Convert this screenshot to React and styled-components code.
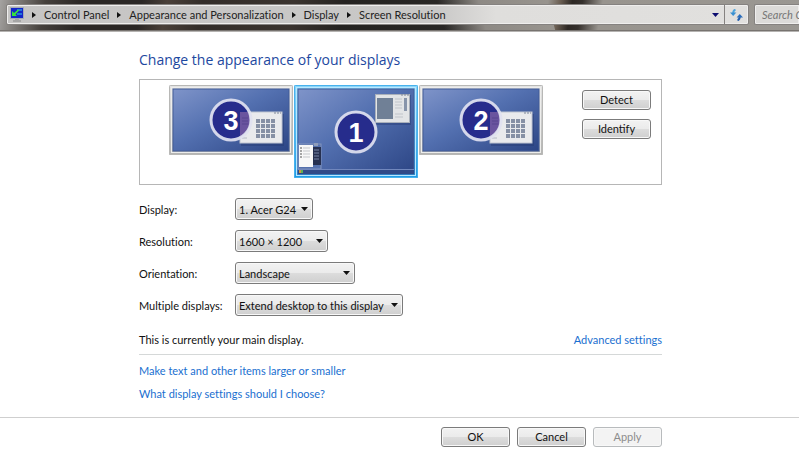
import React, { useState } from 'react';
import styled, { createGlobalStyle, css } from 'styled-components';

const GlobalStyle = createGlobalStyle`
  * { box-sizing: border-box; }
  body { margin: 0; background: #fff; font-variant-ligatures: none; }
  body, button, select, input { font-family: Lato, "Open Sans", sans-serif; font-size: 11px; color: #111; }
`;

const Window = styled.div`
  display: flex;
  flex-direction: column;
  min-height: 100vh;
  overflow: hidden;
`;

const TopBar = styled.header`
  display: flex;
  align-items: center;
  height: 32px;
  padding: 0 0 2px 6px;
  gap: 5px;
  border-bottom: 1px solid #b5b3b1;
  background:
    linear-gradient(#77736f, #77736f) bottom / 100% 1px no-repeat,
    linear-gradient(75deg, transparent 0, transparent 430px, #8d8984 470px, #98948e 536px, transparent 537px),
    linear-gradient(100deg, #a5a3a1 0, #8b8885 12px, #45403c 45px, #2b2725 80px, #2b2725 140px, #4a4039 165px,
      #332d29 200px, #3b342f 290px, #252321 340px, #2b2927 480px, #98948e 510px,
      #98948e 540px, #6b5f53 552px, #2d2824 564px, #35302c 574px, #98948e 594px, #9a9792 100%);
`;

const AddressBox = styled.nav`
  display: flex;
  flex: 1;
  align-items: center;
  min-width: 0;
  height: 21px;
  padding-left: 3px;
  border: 1px solid #858280;
  border-radius: 2px;
  box-shadow: inset 0 0 0 1px #efeeed;
  background: linear-gradient(90deg, #c6c5c4, #c9c8c7 58%, #dfdedc 66%, #e1e0de);
`;

const Crumbs = styled.ol`
  display: flex;
  flex: 1;
  align-items: center;
  margin: 0;
  padding: 0;
  list-style: none;
`;

const Crumb = styled.li`
  display: flex;
  align-items: center;
  white-space: nowrap;
`;

const CrumbLink = styled.a`
  color: #222;
  text-decoration: none;
`;

const ArrowIcon = styled.svg`
  width: 4px;
  height: 6px;
  margin: 0 8px;
`;

const BarButton = styled.button`
  display: flex;
  align-items: center;
  justify-content: center;
  width: ${(p) => p.$width};
  height: 19px;
  padding: 0;
  border: 0;
  border-left: ${(p) => (p.$divided ? '1px solid #858280' : '0')};
  background: transparent;
`;

const Search = styled.input`
  width: 45px;
  height: 21px;
  padding: 0 0 0 7px;
  border: 1px solid #858280;
  border-right: 0;
  border-radius: 2px 0 0 2px;
  background: #dcdbd9;
  box-shadow: inset 0 0 0 1px #efeeed;
  font-style: italic;
  &::placeholder { color: #777; opacity: 1; }
`;

const Content = styled.main`
  flex: 1;
  max-width: 662px;
  padding: 20px 0 0 139px;
`;

const Title = styled.h1`
  margin: 0 0 11px;
  color: #1d48a0;
  font-family: "Open Sans", "Noto Sans", sans-serif;
  font-size: 14px;
  font-weight: 400;
  line-height: 16px;
`;

const Panel = styled.section`
  display: flex;
  justify-content: space-between;
  align-items: flex-start;
  height: 106px;
  padding: 5px 10px 0 29px;
  border: 1px solid #b6b6b6;
`;

const Monitors = styled.div`
  display: flex;
  align-items: flex-start;
`;

const MonitorButton = styled.button`
  display: block;
  padding: 0;
  border: 0;
  background: transparent;
  svg { display: block; }
`;

const Numeral = styled.text`
  fill: #fff;
  font-family: "Liberation Sans", sans-serif;
  font-size: 27px;
  font-weight: 700;
  text-anchor: middle;
`;

const Stack = styled.div`
  display: flex;
  flex-direction: column;
  gap: 9px;
  padding-top: 5px;
`;

const control = css`
  border: 1px solid #7b7b7b;
  border-radius: 3px;
  background: linear-gradient(#f2f2f2, #ebebeb 48%, #dcdcdc 52%, #cfcfcf);
  box-shadow: inset 0 0 0 1px #f8f8f8;
`;

const Button = styled.button`
  ${control}
  width: 69px;
  height: 20px;
  padding: 0;
  line-height: 16px;
  &:disabled {
    border-color: #b8bbbd;
    background: #f3f3f3;
    color: #8c8c8c;
  }
`;

const Form = styled.div`
  display: grid;
  grid-template-columns: 96px 1fr;
  row-gap: 10px;
  align-items: center;
  padding-top: 13px;
`;

const SelectWrap = styled.div`
  display: grid;
  grid-template-columns: 1fr 12px;
  align-items: center;
  width: ${(p) => p.$width};
`;

const Select = styled.select`
  ${control}
  grid-area: 1 / 1 / 2 / 3;
  appearance: none;
  width: 100%;
  height: 22px;
  padding: 0 12px 0 3px;
`;

const SelectArrow = styled.svg`
  grid-area: 1 / 2;
  width: 7px;
  height: 4px;
  pointer-events: none;
  z-index: 1;
`;

const StatusRow = styled.div`
  display: flex;
  justify-content: space-between;
  margin-top: 16px;
  padding-bottom: 6px;
  border-bottom: 1px solid #d5d8d8;
  line-height: 16px;
`;

const Link = styled.a`
  color: #1a6fd0;
  text-decoration: none;
  line-height: 16px;
`;

const Links = styled.div`
  display: flex;
  flex-direction: column;
  align-items: flex-start;
  gap: 7px;
  padding-top: 8px;
`;

const Footer = styled.footer`
  height: 37px;
  border-top: 1px solid #cfcfcf;
`;

const Actions = styled.div`
  display: flex;
  justify-content: flex-end;
  gap: 7px;
  max-width: 662px;
  padding-top: 9px;
`;

function CrumbArrow() {
  return <ArrowIcon viewBox="0 0 4 6" aria-hidden="true"><path d="M0 0L4 3L0 6Z" fill="#111" /></ArrowIcon>;
}

function DisplayIcon() {
  return (
    <svg width="14" height="15" viewBox="0 0 14 15" aria-hidden="true">
      <rect x="0.5" y="0.5" width="13" height="11" fill="#d9dde2" stroke="#a3abb5" />
      <rect x="1" y="1" width="12" height="10" fill="#1426c8" />
      <path d="M7 2H12V4H7ZM7 6H12V8H7Z" fill="#2478d8" />
      <path d="M2 4V9H7L5.500 7.500L9 3.500L8 2.500L4 6Z" fill="#35e43a" />
      <path d="M5 12H9V13H11V15H3V13H5Z" fill="#a6a6a6" />
    </svg>
  );
}

function RefreshIcon() {
  return (
    <svg width="13" height="12" viewBox="0 0 13 12" aria-hidden="true">
      <path d="M5.500 0.800C3.600 1.200 3.200 2.500 3.200 4.500" fill="none" stroke="#4ba3dc" strokeWidth="2" />
      <path d="M0 3.500H6.400L3.200 7Z" fill="#3a8fd0" />
      <path d="M7.500 11.200C9.400 10.800 9.800 9.500 9.800 7" fill="none" stroke="#1e5cae" strokeWidth="2" />
      <path d="M6.600 8.500H13L9.800 5Z" fill="#2a6cba" />
    </svg>
  );
}

function CalendarWindow() {
  const dots = [0, 1, 2, 3].flatMap((r) => [0, 1, 2, 3].map((c) => [88 + c * 5, 35 + r * 5]));
  return (
    <g>
      <rect x="72" y="29" width="43" height="32" fill="#22386f" opacity="0.4" />
      <rect x="71" y="27" width="42" height="31" fill="#e9eaed" stroke="#bfc5d2" />
      <path d="M105 28H112" stroke="#7d8698" strokeDasharray="2 1" />
      <path d="M73 53H78" stroke="#b6bac6" />
      {dots.map(([x, y]) => <rect key={`${x}-${y}`} x={x - 1} y={y - 1} width="4" height="4" fill="#8690a5" />)}
    </g>
  );
}

function PhotoWindow() {
  return (
    <g>
      <rect x="82" y="10" width="35" height="30" fill="#22386f" opacity="0.4" />
      <rect x="81.500" y="9.500" width="34" height="28" fill="#e2e4e6" stroke="#a9b0bb" />
      <rect x="83" y="13" width="16" height="21" fill="#708096" />
      <path d="M107 10H115" stroke="#7d8698" strokeDasharray="2 1" />
      <path d="M101 14H108M101 17H108M101 20H108M101 23H108M101 29H109M101 32H109" stroke="#c0c4ca" />
      <rect x="110" y="13" width="3" height="13" fill="#8794aa" />
    </g>
  );
}

function StartMenu() {
  return (
    <g>
      <rect x="4" y="59" width="23" height="25" fill="#5571ad" stroke="#8294bd" />
      <rect x="18" y="62" width="9" height="18" fill="#263050" />
      <rect x="20" y="58" width="4" height="3" fill="#8e9cb9" />
      <path d="M20 65H25M20 68H25M20 71H25M20 74H25" stroke="#7683a5" />
      <rect x="5" y="60" width="14" height="22" fill="#f8f8f8" />
      <path d="M9 63H16M9 66H16M9 69H16M9 72H16" stroke="#c5c7cb" />
      <path d="M6 63H8M6 66H8M6 69H8M6 72H8" stroke="#555" />
      <path d="M4 84.500H120" stroke="#7187bd" />
      <rect x="4" y="85" width="116" height="4" fill="#304a88" />
      <rect x="5" y="85" width="2" height="3" fill="#cf9a44" />
      <rect x="7" y="85" width="2" height="3" fill="#5caf57" />
    </g>
  );
}

function Monitor({ number, height, selected, onSelect }) {
  const id = `screen-${number}`;
  const cy = Math.round(height / 2);
  return (
    <MonitorButton type="button" aria-label={`Display ${number}`} onClick={onSelect}>
      <svg width="125" height={height} viewBox={`0 0 125 ${height}`}>
        <defs>
          <linearGradient id={id} x1="0" y1="0" x2="1" y2="1">
            <stop offset="0" stopColor="#7f94c9" />
            <stop offset="0.45" stopColor="#5370b0" />
            <stop offset="1" stopColor="#2c4585" />
          </linearGradient>
          <linearGradient id={`${id}-frame`} x1="0" y1="0" x2="0" y2="1">
            <stop offset="0" stopColor={selected ? '#8ad6fb' : '#e4e4e4'} />
            <stop offset="1" stopColor={selected ? '#1f9be6' : '#b4b4b2'} />
          </linearGradient>
        </defs>
        <rect x="0" y="0" width="124" height={height} rx="1" fill={`url(#${id}-frame)`} />
        <rect x="0.500" y="0.500" width="123" height={height - 1} rx="1" fill="none" stroke={selected ? '#49b2ec' : '#b8b8b6'} />
        <rect x="2.500" y="2.500" width="119" height={height - 5} fill="none" stroke={selected ? '#b9e8ff' : '#ededeb'} />
        <rect x="4" y="4" width="116" height={height - 8} fill={`url(#${id})`} stroke="#425c98" />
        {number === 1 ? <><PhotoWindow /><StartMenu /></> : <CalendarWindow />}
        <circle cx="62" cy={cy} r="19" fill="#262c8c" />
        {number !== 1 && (
          <>
            <path d="M71 27H79A19 19 0 0 1 71 52Z" fill="#6a549f" />
            <path d="M73 33H79M73 36H79M73 39H79" stroke="#57458f" />
          </>
        )}
        <circle cx="62" cy={cy} r="20" fill="none" stroke="#dfe1f0" strokeWidth="3" strokeOpacity="0.92" />
        <Numeral x="62" y={cy + 10}>{number}</Numeral>
      </svg>
    </MonitorButton>
  );
}

function Field({ id, label, width, options }) {
  return (
    <>
      <label htmlFor={id}>{label}</label>
      <SelectWrap $width={width}>
        <Select id={id}>{options.map((o) => <option key={o}>{o}</option>)}</Select>
        <SelectArrow viewBox="0 0 7 4" aria-hidden="true"><path d="M0 0H7L3.500 4Z" fill="#111" /></SelectArrow>
      </SelectWrap>
    </>
  );
}

const crumbs = ['Control Panel', 'Appearance and Personalization', 'Display', 'Screen Resolution'];

export default function App() {
  const [active, setActive] = useState(1);
  return (
    <Window>
      <GlobalStyle />
      <TopBar>
        <AddressBox aria-label="Address">
          <DisplayIcon />
          <Crumbs>
            {crumbs.map((c) => <Crumb key={c}><CrumbArrow /><CrumbLink href="#">{c}</CrumbLink></Crumb>)}
          </Crumbs>
          <BarButton type="button" $width="18px" aria-label="Previous locations">
            <svg width="7" height="4" viewBox="0 0 7 4"><path d="M0 0H7L3.500 4Z" fill="#0d0d70" /></svg>
          </BarButton>
          <BarButton type="button" $width="24px" $divided aria-label="Refresh"><RefreshIcon /></BarButton>
        </AddressBox>
        <Search aria-label="Search Control Panel" placeholder="Search Control Panel" />
      </TopBar>
      <Content>
        <Title>Change the appearance of your displays</Title>
        <Panel>
          <Monitors>
            <Monitor number={3} height={70} selected={active === 3} onSelect={() => setActive(3)} />
            <Monitor number={1} height={93} selected={active === 1} onSelect={() => setActive(1)} />
            <Monitor number={2} height={70} selected={active === 2} onSelect={() => setActive(2)} />
          </Monitors>
          <Stack>
            <Button type="button">Detect</Button>
            <Button type="button">Identify</Button>
          </Stack>
        </Panel>
        <Form>
          <Field id="display" label="Display:" width="78px" options={['1. Acer G24']} />
          <Field id="resolution" label="Resolution:" width="93px" options={['1600 × 1200']} />
          <Field id="orientation" label="Orientation:" width="120px" options={['Landscape', 'Portrait']} />
          <Field id="multiple" label="Multiple displays:" width="168px" options={['Extend desktop to this display']} />
        </Form>
        <StatusRow>
          <span>This is currently your main display.</span>
          <Link href="#">Advanced settings</Link>
        </StatusRow>
        <Links>
          <Link href="#">Make text and other items larger or smaller</Link>
          <Link href="#">What display settings should I choose?</Link>
        </Links>
      </Content>
      <Footer>
        <Actions>
          <Button type="button">OK</Button>
          <Button type="button">Cancel</Button>
          <Button type="button" disabled>Apply</Button>
        </Actions>
      </Footer>
    </Window>
  );
}
